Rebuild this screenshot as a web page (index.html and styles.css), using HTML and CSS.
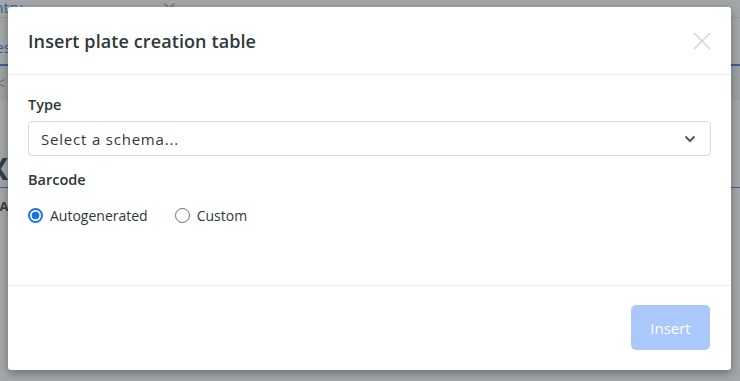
FILE: index.html
```html
<!DOCTYPE html>
<html lang="en">
<head>
    <meta charset="UTF-8">
    <meta name="viewport" content="width=device-width, initial-scale=1.0">
    <title>Insert plate creation table</title>
    <link rel="stylesheet" href="styles.css">
</head>
<body>
    <!-- page behind the dialog -->
    <div class="page">
        <div class="page-tab">
            <span class="page-link">Entry</span>
            <span class="page-close">&times;</span>
        </div>
        <div class="page-row page-row-sub"><span class="page-link">Res</span></div>
        <div class="page-row page-row-grey"><span class="page-dim">&lt;</span></div>
        <div class="page-big">X</div>
        <div class="page-row page-row-line"><span class="page-small">DA</span></div>
    </div>

    <div class="backdrop">
        <div class="modal">
            <div class="modal-header">
                <h2 class="modal-title">Insert plate creation table</h2>
                <button class="modal-close" aria-label="Close">
                    <svg width="18" height="18" viewBox="0 0 18 18">
                        <path d="M1 1L17 17M17 1L1 17" stroke="#d3d6d7" stroke-width="1.6" fill="none"/>
                    </svg>
                </button>
            </div>

            <div class="modal-body">
                <label class="field-label" for="schemaSelect">Type</label>
                <div class="select-box" id="schemaSelect">
                    <span>Select a schema...</span>
                    <svg width="12" height="8" viewBox="0 0 12 8">
                        <path d="M1.5 1.5L6 6L10.5 1.5" stroke="#4b5d63" stroke-width="2" fill="none"/>
                    </svg>
                </div>

                <div class="field-label">Barcode</div>
                <div class="radio-row">
                    <label class="radio">
                        <span class="radio-dot checked"></span>
                        Autogenerated
                    </label>
                    <label class="radio">
                        <span class="radio-dot"></span>
                        Custom
                    </label>
                </div>
            </div>

            <div class="modal-footer">
                <button class="btn-insert" disabled>Insert</button>
            </div>
        </div>
    </div>
</body>
</html>
```

FILE: styles.css
```css
* {
    box-sizing: border-box;
}

body {
    margin: 0;
    width: 740px;
    height: 381px;
    overflow: hidden;
    font-family: "Open Sans", Lato, sans-serif;
    background: #fff;
    position: relative;
}

/* Page behind the dialog */
.page {
    height: 100%;
}

.page-tab {
    height: 18px;
    display: flex;
    align-items: flex-end;
    border-bottom: 1px solid #e4e7e8;
}

.page-link {
    color: #2f6fd6;
    font-size: 15px;
    margin-left: -14px;
}

.page-close {
    margin-left: 140px;
    color: #9aa3a6;
    font-size: 24px;
    line-height: 18px;
}

.page-row {
    height: 36px;
    display: flex;
    align-items: center;
}

.page-row-sub {
    margin-top: 12px;
    border-bottom: 2px solid #2f6fd6;
}

.page-row-grey {
    height: 34px;
    background: #f1f2f3;
}

.page-dim {
    color: #8d989c;
    margin-left: -4px;
}

.page-big {
    margin-top: 48px;
    font-size: 30px;
    font-weight: 700;
    color: #1f2a2e;
    margin-left: -12px;
    border-bottom: 1px solid #2f6fd6;
    height: 40px;
}

.page-small {
    font-weight: 700;
    font-size: 13px;
    color: #1f2a2e;
    margin-left: -10px;
}

/* Overlay */
.backdrop {
    position: absolute;
    inset: 0;
    background: rgba(74, 80, 84, 0.5);
}

.modal {
    position: absolute;
    left: 8px;
    top: 7px;
    width: 723px;
    height: 363px;
    background: #fff;
    border-radius: 3px;
    box-shadow: 0 3px 10px rgba(0, 0, 0, 0.35);
    display: flex;
    flex-direction: column;
}

.modal-header {
    height: 68px;
    padding: 0 20px;
    display: flex;
    align-items: center;
    justify-content: space-between;
    border-bottom: 1px solid #e8eced;
}

.modal-title {
    margin: 0;
    font-size: 18px;
    font-weight: 600;
    color: #2f383b;
    letter-spacing: 0.1px;
}

.modal-close {
    background: none;
    border: none;
    padding: 0;
    margin-top: 1px;
    width: 18px;
    height: 18px;
}

.modal-body {
    flex: 1;
    padding: 21px 20px 0;
    border-bottom: 1px solid #e8eced;
}

.field-label {
    display: block;
    font-size: 14.5px;
    font-weight: 600;
    color: #2f383b;
    line-height: 18px;
}

.select-box {
    margin-top: 7px;
    margin-bottom: 15px;
    height: 35px;
    border: 1px solid #cfd9dc;
    border-radius: 4px;
    padding: 1px 14px 0 12px;
    display: flex;
    align-items: center;
    justify-content: space-between;
    font-size: 15px;
    color: #2f383b;
    letter-spacing: 0.8px;
}

.radio-row {
    margin-top: 17px;
    display: flex;
    gap: 27px;
}

.radio {
    display: flex;
    align-items: center;
    gap: 7px;
    font-size: 14px;
    color: #2f383b;
}

.radio-dot {
    width: 15px;
    height: 15px;
    border-radius: 50%;
    border: 1px solid #6c6f71;
    background: #fff;
}

.radio-dot.checked {
    border: 2px solid #1a73e8;
    background: radial-gradient(circle, #1a73e8 0 3.6px, #fff 4.2px);
}

.modal-footer {
    height: 84px;
    padding: 19px 21px 0 0;
    display: flex;
    justify-content: flex-end;
    align-items: flex-start;
}

.btn-insert {
    width: 79px;
    height: 45px;
    border: none;
    border-radius: 5px;
    background: #aac8fb;
    color: #fff;
    font-family: "Open Sans", Lato, sans-serif;
    font-size: 15px;
}
```
